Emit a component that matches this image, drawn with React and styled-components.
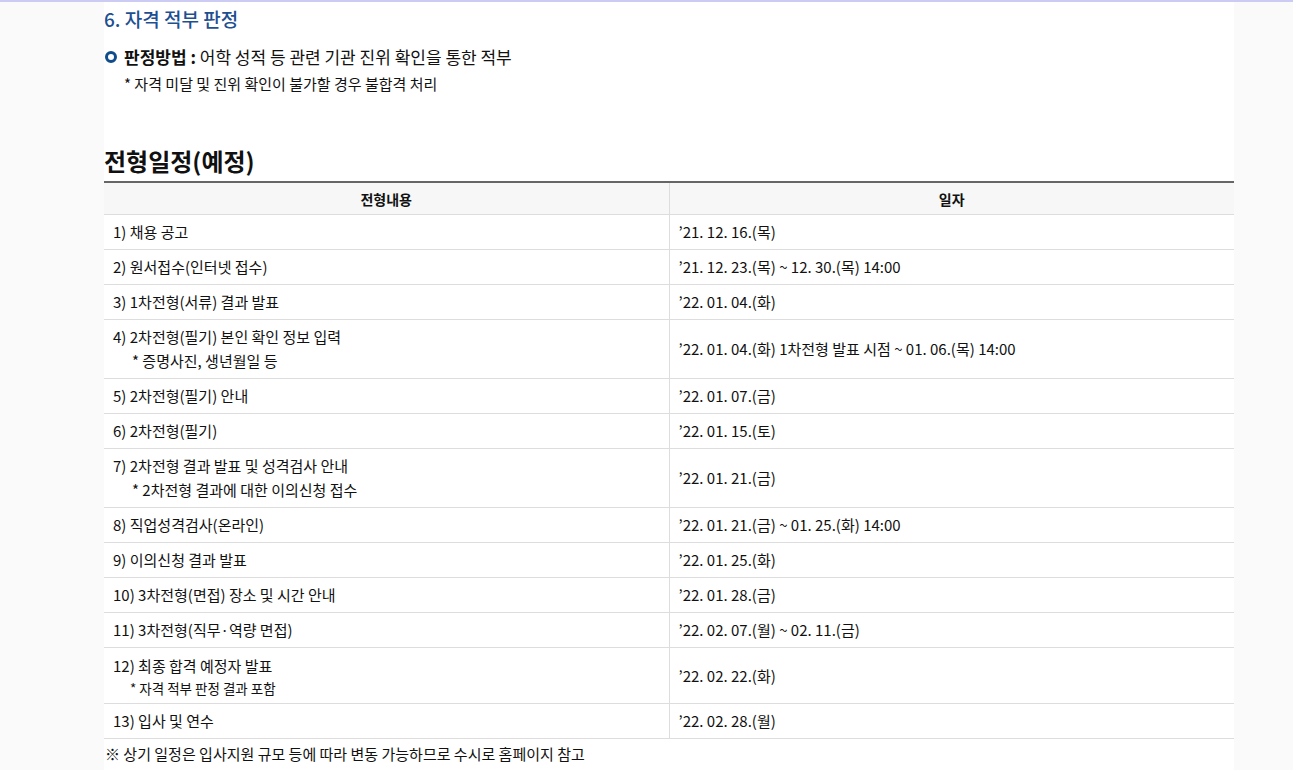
import React from "react";
import styled, { createGlobalStyle } from "styled-components";

const Global = createGlobalStyle`
  html, body { margin: 0; padding: 0; background: #fafafa; }
  body { font-family: "Noto Sans CJK KR", "Noto Sans", sans-serif; color: #111; }
`;

const TopLine = styled.div`
  height: 2px;
  background: #cbcbf3;
`;

const Page = styled.div`
  padding-left: 104px;
`;

const Content = styled.div`
  width: 1130px;
  background: #fff;
  padding-bottom: 6px;
`;

const SectionTitle = styled.h3`
  margin: 0;
  padding-top: 4px;
  font-size: 19px;
  font-weight: 500;
  line-height: 26px;
  color: #1d4f91;
`;

const MethodRow = styled.div`
  display: flex;
  align-items: center;
  gap: 7px;
  margin-top: 13px;
  font-size: 17px;
  line-height: 24px;
`;

const Bullet = styled.span`
  width: 6px;
  height: 6px;
  border: 3px solid #0f4c8c;
  border-radius: 50%;
  margin-left: 1px;
  flex: none;
`;

const Strong = styled.strong`
  font-weight: 700;
`;

const SubNote = styled.p`
  margin: 4px 0 0 20px;
  font-size: 15px;
  line-height: 22px;
`;

const ScheduleTitle = styled.h2`
  margin: 50px 0 0;
  font-size: 24px;
  font-weight: 700;
  line-height: 32px;
`;

const Table = styled.table`
  width: 100%;
  margin-top: 4px;
  border-collapse: collapse;
  border-top: 2px solid #666;
  font-size: 15px;
  table-layout: fixed;
`;

const Th = styled.th`
  background: #f7f7f7;
  font-weight: 700;
  font-size: 14px;
  height: 31px;
  padding: 0;
  border-bottom: 1px solid #ddd;
  & + & { border-left: 1px solid #ddd; }
`;

const Td = styled.td`
  padding: 0 9px;
  height: ${(p) => (p.$tall ? 58 : p.$mid ? 55 : 34)}px;
  border-bottom: 1px solid #ddd;
  line-height: 24px;
  vertical-align: middle;
  & + & { border-left: 1px solid #ddd; }
`;

const Note = styled.div`
  padding-left: ${(p) => (p.$small ? 17 : 19)}px;
  font-size: ${(p) => (p.$small ? 13.5 : 15)}px;
  line-height: ${(p) => (p.$small ? 20 : 24)}px;
`;

const Footer = styled.p`
  margin: 4px 0 0 1px;
  font-size: 15px;
  line-height: 22px;
`;

const rows = [
  ["1) 채용 공고", null, "’21. 12. 16.(목)"],
  ["2) 원서접수(인터넷 접수)", null, "’21. 12. 23.(목) ~ 12. 30.(목) 14:00"],
  ["3) 1차전형(서류) 결과 발표", null, "’22. 01. 04.(화)"],
  ["4) 2차전형(필기) 본인 확인 정보 입력", "* 증명사진, 생년월일 등", "’22. 01. 04.(화) 1차전형 발표 시점 ~ 01. 06.(목) 14:00"],
  ["5) 2차전형(필기) 안내", null, "’22. 01. 07.(금)"],
  ["6) 2차전형(필기)", null, "’22. 01. 15.(토)"],
  ["7) 2차전형 결과 발표 및 성격검사 안내", "* 2차전형 결과에 대한 이의신청 접수", "’22. 01. 21.(금)"],
  ["8) 직업성격검사(온라인)", null, "’22. 01. 21.(금) ~ 01. 25.(화) 14:00"],
  ["9) 이의신청 결과 발표", null, "’22. 01. 25.(화)"],
  ["10) 3차전형(면접) 장소 및 시간 안내", null, "’22. 01. 28.(금)"],
  ["11) 3차전형(직무·역량 면접)", null, "’22. 02. 07.(월) ~ 02. 11.(금)"],
  ["12) 최종 합격 예정자 발표", "* 자격 적부 판정 결과 포함", "’22. 02. 22.(화)", true],
  ["13) 입사 및 연수", null, "’22. 02. 28.(월)"],
];

export default function App() {
  return (
    <>
      <Global />
      <TopLine />
      <Page>
        <Content>
          <SectionTitle>6. 자격 적부 판정</SectionTitle>
          <MethodRow>
            <Bullet />
            <span>
              <Strong>판정방법 :</Strong> 어학 성적 등 관련 기관 진위 확인을 통한 적부
            </span>
          </MethodRow>
          <SubNote>* 자격 미달 및 진위 확인이 불가할 경우 불합격 처리</SubNote>
          <ScheduleTitle>전형일정(예정)</ScheduleTitle>
          <Table>
            <thead>
              <tr>
                <Th>전형내용</Th>
                <Th>일자</Th>
              </tr>
            </thead>
            <tbody>
              {rows.map(([title, note, date, small]) => (
                <tr key={title}>
                  <Td $tall={note && !small} $mid={small}>
                    {title}
                    {note && <Note $small={small}>{note}</Note>}
                  </Td>
                  <Td>{date}</Td>
                </tr>
              ))}
            </tbody>
          </Table>
          <Footer>※ 상기 일정은 입사지원 규모 등에 따라 변동 가능하므로 수시로 홈페이지 참고</Footer>
        </Content>
      </Page>
    </>
  );
}
